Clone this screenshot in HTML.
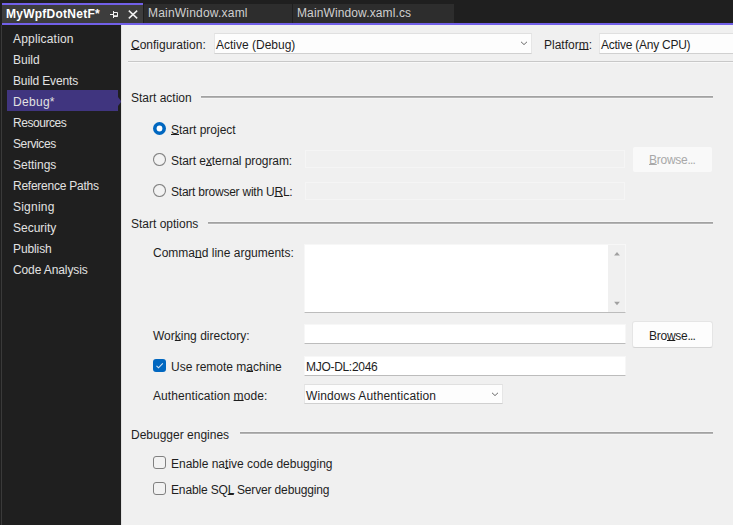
<!DOCTYPE html>
<html><head><meta charset="utf-8">
<style>
*{margin:0;padding:0;box-sizing:border-box}
html,body{width:733px;height:525px;overflow:hidden;background:#1f1f1f}
body{position:relative;font:12px/15px "Liberation Sans",sans-serif;color:#1e1e1e}
.a{position:absolute;white-space:nowrap}
.side{color:#e2e2e2}
u{text-decoration:underline;text-decoration-thickness:1px;text-underline-offset:0px}
.combo{background:#fdfdfd;border:1px solid #e6e6e6;border-top-color:#e0e0e0;border-bottom-color:#d0d0d0}
.hr{height:4px;background:linear-gradient(#f5f5f5 0 1px,#a2a2a2 1px 2px,#b4b4b4 2px 3px,#f5f5f5 3px 4px)}
.tbd{border:1px solid #f5f5f5}
.btn{background:#fdfdfd;border:1px solid #e5e5e5;border-bottom-color:#d5d5d5;border-radius:3px}
.chk{width:13px;height:13px;border-radius:3px;border:1px solid #808080;background:#f2f2f2}
.chk.on{border:none;background:#0067c0}
.chk svg{display:block}
</style></head><body>
<!-- tab strip -->
<div class="a" style="left:2px;top:3px;width:141px;height:2px;background:#7160e8"></div>
<div class="a" style="left:2px;top:5px;width:141px;height:18px;background:#3d3d3d"></div>
<div class="a" style="left:144px;top:4px;width:148px;height:19px;background:#2d2d2d"></div>
<div class="a" style="left:293px;top:4px;width:161px;height:19px;background:#2d2d2d"></div>
<div class="a" style="left:2px;top:23px;width:731px;height:2px;background:#7160e8"></div>
<div class="a" style="left:6px;top:7px;font-weight:bold;color:#fff;letter-spacing:0.25px">MyWpfDotNetF*</div>
<svg class="a" style="left:109px;top:10px" width="10" height="9" viewBox="0 0 10 9">
 <path d="M1 4.5H4.5M4.5 1V8M4.5 2.5H8.5V6.5H4.5" stroke="#f0f0f0" stroke-width="1" fill="none"/>
 <path d="M4.5 6H8.5" stroke="#f0f0f0" stroke-width="1.5" fill="none"/>
</svg>
<svg class="a" style="left:127px;top:9px" width="12" height="11" viewBox="0 0 12 11">
 <path d="M1.8 1.6L10.2 9.4M10.2 1.6L1.8 9.4" stroke="#f0f0f0" stroke-width="1.5" fill="none"/>
</svg>
<div class="a" style="left:148px;top:6px;color:#d0d0d0;letter-spacing:0.2px">MainWindow.xaml</div>
<div class="a" style="left:297px;top:6px;color:#d0d0d0;letter-spacing:0.12px">MainWindow.xaml.cs</div>

<!-- sidebar -->
<div class="a" style="left:1px;top:25px;width:1px;height:500px;background:#3a3a3a"></div>
<div class="a" style="left:7px;top:90px;width:111px;height:21px;background:#40357f"></div>
<svg class="a" style="left:118px;top:97px" width="4" height="9" viewBox="0 0 4 9"><path d="M0 0L3.5 4.5L0 9Z" fill="#40357f"/></svg>
<div class="a side" style="left:13px;top:32px;letter-spacing:0.18px">Application</div>
<div class="a side" style="left:13px;top:53px">Build</div>
<div class="a side" style="left:13px;top:74px;letter-spacing:-0.14px">Build Events</div>
<div class="a side" style="left:13px;top:95px;letter-spacing:0.3px">Debug*</div>
<div class="a side" style="left:13px;top:116px;letter-spacing:-0.45px">Resources</div>
<div class="a side" style="left:13px;top:137px;letter-spacing:-0.4px">Services</div>
<div class="a side" style="left:13px;top:158px">Settings</div>
<div class="a side" style="left:13px;top:179px;letter-spacing:-0.25px">Reference Paths</div>
<div class="a side" style="left:13px;top:200px;letter-spacing:0.22px">Signing</div>
<div class="a side" style="left:13px;top:221px">Security</div>
<div class="a side" style="left:13px;top:242px;letter-spacing:-0.1px">Publish</div>
<div class="a side" style="left:13px;top:263px;letter-spacing:-0.11px">Code Analysis</div>

<!-- content -->
<div class="a" id="content" style="left:121px;top:25px;width:612px;height:500px;background:#f0f0f0"></div>
<div class="a" style="left:121px;top:25px;width:1px;height:500px;background:#e2e2e2"></div>


<!-- config row -->
<div class="a" style="left:131px;top:38px"><u>C</u>onfiguration:</div>
<div class="a combo" style="left:214px;top:33px;width:318px;height:21px"></div>
<div class="a" style="left:216px;top:38px">Active (Debug)</div>
<svg class="a" style="left:520px;top:41px" width="8" height="5" viewBox="0 0 8 5"><path d="M1 0.8L4 3.6L7 0.8" stroke="#6a6a6a" fill="none"/></svg>
<div class="a" style="left:544px;top:38px">Platfor<u>m</u>:</div>
<div class="a combo" style="left:599px;top:33px;width:140px;height:21px"></div>
<div class="a" style="left:601px;top:38px;letter-spacing:-0.25px">Active (Any CPU)</div>
<div class="a" style="left:128px;top:61px;width:605px;height:1px;background:#c8c8c8"></div>
<div class="a" style="left:128px;top:62px;width:605px;height:1px;background:#f8f8f8"></div>

<!-- start action -->
<div class="a" style="left:131px;top:91px">Start action</div>
<div class="a hr" style="left:201px;top:95px;width:512px"></div>
<svg class="a" style="left:153px;top:122px" width="13" height="13" viewBox="0 0 13 13"><circle cx="6.5" cy="6.5" r="6.5" fill="#0067c0"/><circle cx="6.5" cy="6.5" r="2.9" fill="#fff"/></svg>
<div class="a" style="left:171px;top:123px"><u>S</u>tart project</div>
<svg class="a" style="left:153px;top:153px" width="13" height="13" viewBox="0 0 13 13"><circle cx="6.5" cy="6.5" r="6" fill="#f2f2f2" stroke="#868686" stroke-width="1.1"/></svg>
<div class="a" style="left:171px;top:154px;letter-spacing:-0.07px">Start e<u>x</u>ternal program:</div>
<svg class="a" style="left:153px;top:184px" width="13" height="13" viewBox="0 0 13 13"><circle cx="6.5" cy="6.5" r="6" fill="#f2f2f2" stroke="#868686" stroke-width="1.1"/></svg>
<div class="a" style="left:171px;top:185px;letter-spacing:-0.23px">Start browser with U<u>R</u>L:</div>
<div class="a tbd" style="left:305px;top:150px;width:320px;height:18px"></div>
<div class="a tbd" style="left:305px;top:182px;width:320px;height:18px"></div>
<div class="a" style="left:633px;top:147px;width:79px;height:25px;background:#f9f9f9;border-radius:2px"></div>
<div class="a" style="left:649px;top:153px;color:#a8a8a8;letter-spacing:-0.25px"><u>B</u>rowse<span style="letter-spacing:-0.9px">...</span></div>

<!-- start options -->
<div class="a" style="left:131px;top:217px">Start options</div>
<div class="a hr" style="left:208px;top:221px;width:505px"></div>
<div class="a" style="left:153px;top:246px">Comma<u>n</u>d line arguments:</div>
<div class="a" style="left:304px;top:244px;width:322px;height:69px;background:#fff;border:1px solid #f7f7f7;border-bottom:1px solid #bcbcbc"></div>
<div class="a" style="left:608px;top:245px;width:17px;height:67px;background:#f0f0f0"></div>
<svg class="a" style="left:613px;top:251px" width="8" height="5" viewBox="0 0 8 5"><path d="M1.1 4.5L4 1L6.9 4.5Z" fill="#a0a0a0"/></svg>
<svg class="a" style="left:613px;top:301px" width="8" height="5" viewBox="0 0 8 5"><path d="M1.1 0.8L4 4.3L6.9 0.8Z" fill="#a0a0a0"/></svg>

<div class="a" style="left:153px;top:329px">Wor<u>k</u>ing directory:</div>
<div class="a" style="left:304px;top:324px;width:322px;height:20px;background:#fff;border:1px solid #f7f7f7;border-bottom:1px solid #bcbcbc"></div>
<div class="a btn" style="left:632px;top:321px;width:81px;height:27px"></div>
<div class="a" style="left:649px;top:329px;letter-spacing:-0.25px">Bro<u>w</u>se<span style="letter-spacing:-0.9px">...</span></div>

<div class="a chk on" style="left:153px;top:359px"><svg width="13" height="13" viewBox="0 0 13 13"><path d="M3.5 6.8L5.5 8.8L9.8 4.3" stroke="#d8e6f4" stroke-width="1.1" fill="none"/></svg></div>
<div class="a" style="left:171px;top:360px">Use remote m<u>a</u>chine</div>
<div class="a" style="left:304px;top:356px;width:322px;height:20px;background:#fff;border:1px solid #f7f7f7;border-bottom:1px solid #bcbcbc"></div>
<div class="a" style="left:306px;top:360px;letter-spacing:-0.3px">MJO-DL:2046</div>

<div class="a" style="left:153px;top:389px;letter-spacing:0.08px">Authentication <u>m</u>ode:</div>
<div class="a combo" style="left:304px;top:384px;width:199px;height:20px"></div>
<div class="a" style="left:306px;top:389px;letter-spacing:0.12px">Windows Authentication</div>
<svg class="a" style="left:491px;top:392px" width="8" height="5" viewBox="0 0 8 5"><path d="M1 0.8L4 3.6L7 0.8" stroke="#6a6a6a" fill="none"/></svg>

<!-- debugger engines -->
<div class="a" style="left:131px;top:428px">Debugger engines</div>
<div class="a hr" style="left:240px;top:431px;width:473px"></div>
<div class="a chk" style="left:153px;top:456px"></div>
<div class="a" style="left:171px;top:457px">Enable na<u>t</u>ive code debugging</div>
<div class="a chk" style="left:153px;top:482px"></div>
<div class="a" style="left:171px;top:483px;letter-spacing:-0.15px">Enable SQ<u>L</u> Server debugging</div>
</body></html>
